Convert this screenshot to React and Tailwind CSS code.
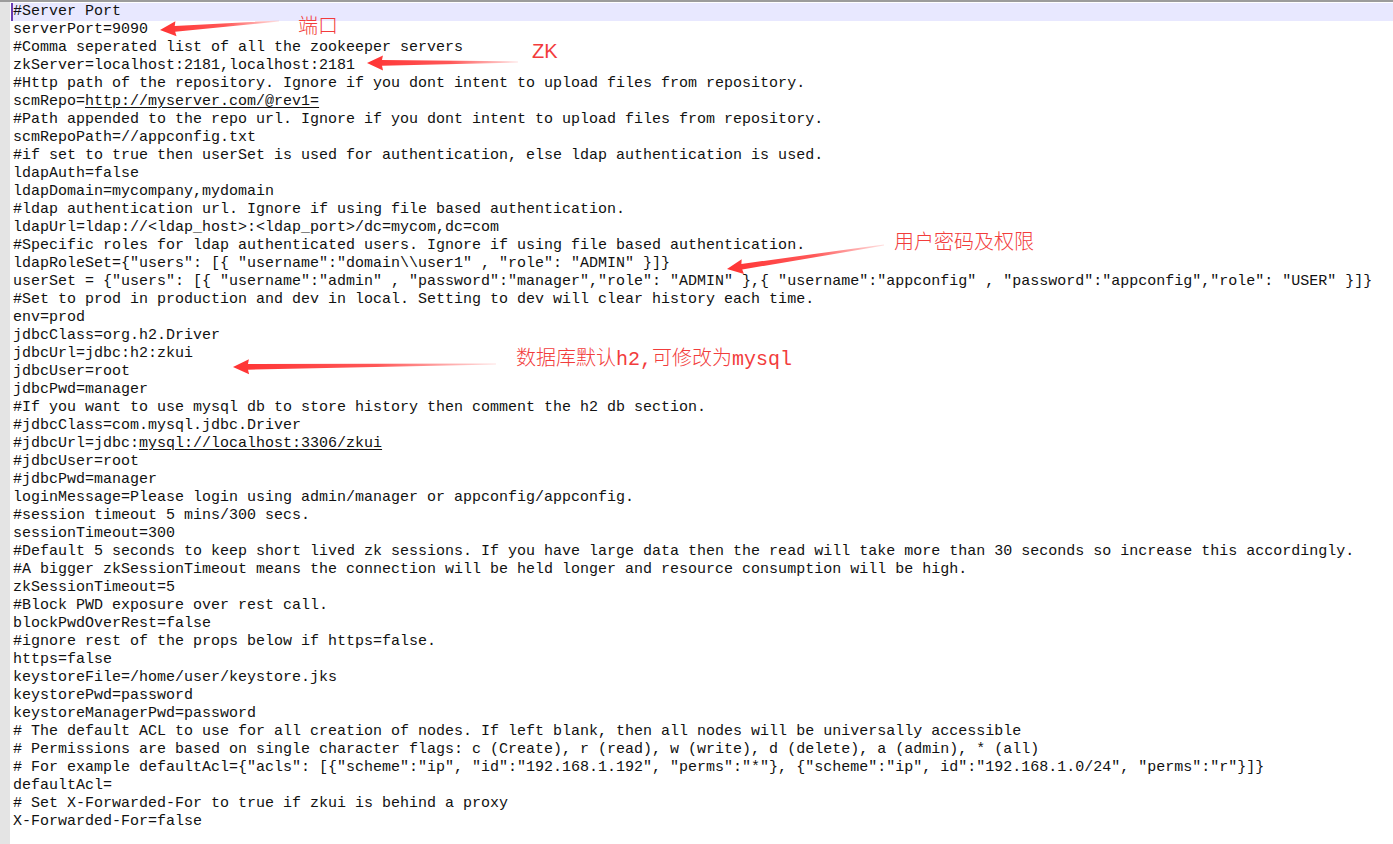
import React from "react";

const lines = [
  "#Server Port",
  "serverPort=9090",
  "#Comma seperated list of all the zookeeper servers",
  "zkServer=localhost:2181,localhost:2181",
  "#Http path of the repository. Ignore if you dont intent to upload files from repository.",
  ["scmRepo=", { u: "http://myserver.com/@rev1=" }],
  "#Path appended to the repo url. Ignore if you dont intent to upload files from repository.",
  "scmRepoPath=//appconfig.txt",
  "#if set to true then userSet is used for authentication, else ldap authentication is used.",
  "ldapAuth=false",
  "ldapDomain=mycompany,mydomain",
  "#ldap authentication url. Ignore if using file based authentication.",
  "ldapUrl=ldap://<ldap_host>:<ldap_port>/dc=mycom,dc=com",
  "#Specific roles for ldap authenticated users. Ignore if using file based authentication.",
  'ldapRoleSet={"users": [{ "username":"domain\\\\user1" , "role": "ADMIN" }]}',
  'userSet = {"users": [{ "username":"admin" , "password":"manager","role": "ADMIN" },{ "username":"appconfig" , "password":"appconfig","role": "USER" }]}',
  "#Set to prod in production and dev in local. Setting to dev will clear history each time.",
  "env=prod",
  "jdbcClass=org.h2.Driver",
  "jdbcUrl=jdbc:h2:zkui",
  "jdbcUser=root",
  "jdbcPwd=manager",
  "#If you want to use mysql db to store history then comment the h2 db section.",
  "#jdbcClass=com.mysql.jdbc.Driver",
  ["#jdbcUrl=jdbc:", { u: "mysql://localhost:3306/zkui" }],
  "#jdbcUser=root",
  "#jdbcPwd=manager",
  "loginMessage=Please login using admin/manager or appconfig/appconfig.",
  "#session timeout 5 mins/300 secs.",
  "sessionTimeout=300",
  "#Default 5 seconds to keep short lived zk sessions. If you have large data then the read will take more than 30 seconds so increase this accordingly.",
  "#A bigger zkSessionTimeout means the connection will be held longer and resource consumption will be high.",
  "zkSessionTimeout=5",
  "#Block PWD exposure over rest call.",
  "blockPwdOverRest=false",
  "#ignore rest of the props below if https=false.",
  "https=false",
  "keystoreFile=/home/user/keystore.jks",
  "keystorePwd=password",
  "keystoreManagerPwd=password",
  "# The default ACL to use for all creation of nodes. If left blank, then all nodes will be universally accessible",
  "# Permissions are based on single character flags: c (Create), r (read), w (write), d (delete), a (admin), * (all)",
  '# For example defaultAcl={"acls": [{"scheme":"ip", "id":"192.168.1.192", "perms":"*"}, {"scheme":"ip", id":"192.168.1.0/24", "perms":"r"}]}',
  "defaultAcl=",
  "# Set X-Forwarded-For to true if zkui is behind a proxy",
  "X-Forwarded-For=false",
];

const arrows = [
  { x1: 279, y1: 19, x2: 160, y2: 28 },
  { x1: 518, y1: 60, x2: 367, y2: 61 },
  { x1: 884, y1: 243, x2: 727, y2: 267 },
  { x1: 496, y1: 362, x2: 233, y2: 365 },
];

function Arrow({ x1, y1, x2, y2, id }) {
  const dx = x2 - x1;
  const dy = y2 - y1;
  const L = Math.sqrt(dx * dx + dy * dy);
  const a = (Math.atan2(dy, dx) * 180) / Math.PI;
  const pts = [
    [0, -0.6],
    [L - 15, -2.8],
    [L - 16, -7.5],
    [L, 0],
    [L - 16, 7.5],
    [L - 15, 2.8],
    [0, 0.6],
  ]
    .map((p) => p.join(","))
    .join(" ");
  return (
    <g transform={`translate(${x1},${y1}) rotate(${a})`}>
      <defs>
        <linearGradient id={id} x1="0" y1="0" x2={L} y2="0" gradientUnits="userSpaceOnUse">
          <stop offset="0" stopColor="#ff3a3a" stopOpacity="0.15" />
          <stop offset="0.45" stopColor="#ff3a3a" stopOpacity="0.85" />
          <stop offset="1" stopColor="#ff3333" stopOpacity="1" />
        </linearGradient>
      </defs>
      <polygon points={pts} fill={`url(#${id})`} />
    </g>
  );
}

export default function App() {
  return (
    <div className="relative w-[1393px] h-[844px] overflow-hidden bg-white border-t-2 border-[#9c9c9c]">
      <div className="flex h-full">
        <div className="w-[10px] shrink-0 bg-[#e4e4e4]" />
        <div className="w-px shrink-0 bg-white" />
        <div
          className="flex-1 pt-px text-[15px] leading-[18px] text-[#111] whitespace-pre"
          style={{ fontFamily: '"Liberation Mono", "Courier New", monospace' }}
        >
          {lines.map((ln, i) => (
            <div
              key={i}
              className={
                i === 0
                  ? "h-[18px] bg-[#e8e8ff] border-l-2 border-[#6a3cb4]"
                  : "h-[18px] border-l-2 border-transparent"
              }
            >
              {Array.isArray(ln)
                ? ln.map((p, j) =>
                    typeof p === "string" ? (
                      <span key={j}>{p}</span>
                    ) : (
                      <span key={j} className="underline underline-offset-2">
                        {p.u}
                      </span>
                    )
                  )
                : ln}
            </div>
          ))}
        </div>
      </div>

      <svg className="absolute left-0 top-0 pointer-events-none" width="1393" height="844">
        {arrows.map((a, i) => (
          <Arrow key={i} id={`ag${i}`} {...a} />
        ))}
      </svg>

      <div
        className="absolute left-[298px] top-[11px] text-[20px] leading-[24px] text-[#f23c3c] font-light"
        style={{ fontFamily: '"Noto Sans CJK SC", sans-serif' }}
      >
        端口
      </div>
      <div
        className="absolute left-[532px] top-[37px] text-[20px] leading-[24px] text-[#f23c3c]"
        style={{ fontFamily: '"Liberation Sans", sans-serif' }}
      >
        ZK
      </div>
      <div
        className="absolute left-[894px] top-[226px] text-[20px] leading-[26px] text-[#f23c3c] font-light"
        style={{ fontFamily: '"Noto Sans CJK SC", sans-serif' }}
      >
        用户密码及权限
      </div>
      <div
        className="absolute left-[516px] top-[345px] text-[20px] leading-[26px] text-[#f23c3c] font-light whitespace-nowrap"
        style={{ fontFamily: '"Liberation Mono", "Noto Sans CJK SC", monospace' }}
      >
        数据库默认h2,可修改为mysql
      </div>
    </div>
  );
}
